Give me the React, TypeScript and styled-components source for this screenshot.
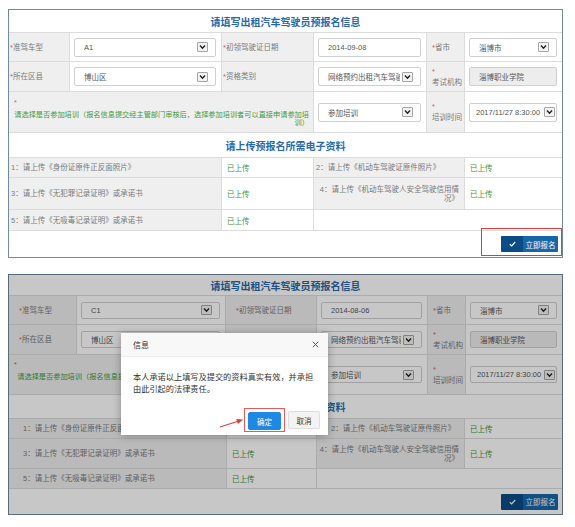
import React from 'react';
import styled, { createGlobalStyle, css } from 'styled-components';

const GlobalStyle = createGlobalStyle`
  html, body {
    margin: 0;
    padding: 0;
    background: #fff;
  }
  body {
    font-family: "Liberation Sans", "Noto Sans CJK SC", sans-serif;
  }
  * {
    box-sizing: border-box;
  }
`;

const Page = styled.div`
  width: 575px;
  height: 527px;
  padding: 9px 0 0 8px;
  display: flex;
  flex-direction: column;
  gap: 16px;
  overflow: hidden;
`;

const normalVars = css`
  --title-h: 23px;
  --row1-h: 29px;
  --row2-h: 30px;
  --row3-h: 41px;
  --ftitle-h: 25px;
  --f1-h: 20px;
  --f2-h: 32px;
  --f3-h: 21px;
  --footer-h: 26px;
  --input-h: 19px;
  --info-cols: 61px 152px 92px 113px 38px 97px;
  --file-cols: 213px 92px 151px 97px;
  --label-pad: 1px;
  --file-pad: 2px;
`;

const compactVars = css`
  --title-h: 21px;
  --row1-h: 29px;
  --row2-h: 30px;
  --row3-h: 40px;
  --ftitle-h: 24px;
  --f1-h: 20px;
  --f2-h: 30px;
  --f3-h: 20px;
  --footer-h: 25px;
  --input-h: 17px;
  --info-cols: 68px 149px 91px 111px 38px 96px;
  --file-cols: 218px 90px 148px 97px;
  --label-pad: 10px;
  --file-pad: 14px;
`;

const Panel = styled.section<{ $compact?: boolean }>`
  position: relative;
  width: 555px;
  border: 1px solid #7189a1;
  background: #fff;
  ${({ $compact }) => ($compact ? compactVars : normalVars)}
`;

const TitleRow = styled.div<{ $files?: boolean }>`
  height: ${({ $files }) => ($files ? 'var(--ftitle-h)' : 'var(--title-h)')};
  display: flex;
  align-items: center;
  justify-content: center;
  border-bottom: 1px solid #dcdcdc;
  font-family: "Noto Sans CJK SC", sans-serif;
  font-size: 10px;
  font-weight: 700;
  color: #2668a8;
`;

const InfoGrid = styled.div`
  display: grid;
  grid-template-columns: var(--info-cols);
  grid-template-rows: var(--row1-h) var(--row2-h) var(--row3-h);
`;

const FileGrid = styled.div`
  display: grid;
  grid-template-columns: var(--file-cols);
  grid-template-rows: var(--f1-h) var(--f2-h) var(--f3-h);
`;

const Cell = styled.div<{ $grey?: boolean; $span?: number; $last?: boolean }>`
  display: flex;
  align-items: center;
  min-width: 0;
  background: ${({ $grey }) => ($grey ? '#efefef' : '#fff')};
  border-bottom: 1px solid #dcdcdc;
  border-right: ${({ $last }) => ($last ? 'none' : '1px solid #dcdcdc')};
  ${({ $span }) => ($span ? `grid-column: span ${$span};` : '')}
`;

const LabelCell = styled(Cell)<{ $narrow?: boolean }>`
  padding-left: ${({ $narrow }) => ($narrow ? '5px' : 'var(--label-pad)')};
  font-size: 7.5px;
  line-height: 11px;
  color: #7a7a7a;
`;

const InputCell = styled(Cell)`
  padding: 0 5px 0 4px;
`;

const Star = styled.span<{ $block?: boolean }>`
  color: #c86060;
  display: ${({ $block }) => ($block ? 'block' : 'inline')};
`;

const TrainingCell = styled(Cell)`
  flex-direction: column;
  align-items: stretch;
  justify-content: center;
  gap: 4px;
  padding: 0 4px 0 5px;
  font-size: 7.2px;
`;

const TrainingText = styled.p`
  margin: 0;
  text-align: right;
  line-height: 8px;
  color: #3c9a3c;
  white-space: nowrap;
`;

const Field = styled.div<{ $disabled?: boolean; $tight?: boolean }>`
  width: 100%;
  height: var(--input-h);
  display: flex;
  align-items: center;
  gap: ${({ $tight }) => ($tight ? '0' : '2px')};
  padding: ${({ $tight }) => ($tight ? '0 1px 0 6px' : '0 7px 0 9px')};
  border: 1px solid #cfcfcf;
  border-radius: 2px;
  background: ${({ $disabled }) => ($disabled ? '#ededed' : '#fff')};
  font-size: 7.5px;
  color: #555;
  overflow: hidden;
`;

const FieldText = styled.span`
  flex: 1;
  min-width: 0;
  white-space: nowrap;
  overflow: hidden;
`;

const ArrowBox = styled.span`
  flex: none;
  width: 11px;
  height: 10px;
  display: flex;
  align-items: center;
  justify-content: center;
  border: 1px solid #a5a5a5;
  border-radius: 1px;
  background: #f3f3f3;
`;

const FileLabel = styled(Cell)<{ $right?: boolean }>`
  padding: 0 5px 0 ${({ $right }) => ($right ? '5px' : 'var(--file-pad)')};
  justify-content: ${({ $right }) => ($right ? 'flex-end' : 'flex-start')};
  text-align: ${({ $right }) => ($right ? 'right' : 'left')};
  font-size: 7.5px;
  line-height: 9px;
  color: #7a7a7a;
  white-space: nowrap;
`;

const FileStatus = styled(Cell)`
  padding-left: 5px;
  font-size: 7.5px;
  color: #3a963a;
`;

const Footer = styled.div`
  height: var(--footer-h);
  display: flex;
  align-items: center;
  justify-content: flex-end;
  padding-right: 4px;
`;

const Highlight = styled.span`
  position: relative;
  display: inline-flex;

  &::after {
    content: '';
    position: absolute;
    left: -20px;
    right: -4px;
    top: -8px;
    bottom: -4px;
    border: 1.5px solid #e0393e;
    pointer-events: none;
  }
`;

const SubmitButton = styled.button`
  display: flex;
  height: 16px;
  width: 57px;
  padding: 0;
  border: none;
  border-radius: 1px;
  overflow: hidden;
  cursor: pointer;
  font-family: "Noto Sans CJK SC", sans-serif;
  font-size: 7.5px;
  color: #fff;
`;

const CheckPart = styled.span`
  width: 22px;
  display: flex;
  align-items: center;
  justify-content: center;
  background: #0b4c86;
`;

const TextPart = styled.span`
  flex: 1;
  display: flex;
  align-items: center;
  justify-content: center;
  background: #1667aa;
`;

const Overlay = styled.div`
  position: absolute;
  inset: -1px;
  background: rgba(0, 0, 0, 0.22);
`;

const Modal = styled.div`
  position: absolute;
  left: 112px;
  top: 58px;
  width: 207px;
  height: 102px;
  display: flex;
  flex-direction: column;
  background: #fff;
  box-shadow: 0 1px 8px rgba(0, 0, 0, 0.3);
  font-family: "Noto Sans CJK SC", sans-serif;
`;

const ModalHeader = styled.div`
  height: 24px;
  flex: none;
  display: flex;
  align-items: center;
  justify-content: space-between;
  padding: 0 9px 0 12px;
  background: #f8f8f8;
  border-bottom: 1px solid #eee;
  font-size: 8px;
  color: #333;
`;

const ModalBody = styled.div`
  flex: 1;
  padding: 14px 12px 0;
  font-size: 8.2px;
  line-height: 11.5px;
  color: #333;
`;

const ModalFooter = styled.div`
  display: flex;
  align-items: center;
  justify-content: flex-end;
  gap: 3px;
  padding: 0 8px 3px;
`;

const ConfirmFrame = styled.span`
  display: inline-flex;
  padding: 3px 3px 1px;
  border: 1px solid #e8585c;
`;

const DialogButton = styled.button<{ $primary?: boolean }>`
  height: 18px;
  width: ${({ $primary }) => ($primary ? '33px' : '32px')};
  padding: 0;
  border: 1px solid ${({ $primary }) => ($primary ? '#1e88e5' : '#dedede')};
  border-radius: 2px;
  background: ${({ $primary }) => ($primary ? '#1e88e5' : '#f3f3f3')};
  color: ${({ $primary }) => ($primary ? '#fff' : '#333')};
  font-family: "Noto Sans CJK SC", sans-serif;
  font-size: 7.5px;
  cursor: pointer;
`;

const PointerArrow = styled.svg`
  position: absolute;
  left: 96px;
  top: 82px;
  overflow: visible;
`;

const Chevron = () => (
  <svg width="7" height="6" viewBox="0 0 7 6">
    <polyline points="1,1.5 3.5,4.2 6,1.5" fill="none" stroke="#222" strokeWidth="1.4" />
  </svg>
);

const SelectBox: React.FC<{ value: string; tight?: boolean }> = ({ value, tight }) => (
  <Field $tight={tight}>
    <FieldText>{value}</FieldText>
    <ArrowBox>
      <Chevron />
    </ArrowBox>
  </Field>
);

const TextBox: React.FC<{ value: string; disabled?: boolean }> = ({ value, disabled }) => (
  <Field $disabled={disabled}>
    <FieldText>{value}</FieldText>
  </Field>
);

interface FormData {
  carType: string;
  licenseDate: string;
}

const SubmitArea: React.FC<{ highlighted?: boolean }> = ({ highlighted }) => {
  const button = (
    <SubmitButton>
      <CheckPart>
        <svg width="7" height="6" viewBox="0 0 7 6">
          <polyline points="0.8,3.2 2.7,5 6.2,1" fill="none" stroke="#fff" strokeWidth="1.2" />
        </svg>
      </CheckPart>
      <TextPart>立即报名</TextPart>
    </SubmitButton>
  );
  return highlighted ? <Highlight>{button}</Highlight> : button;
};

const FormPanel: React.FC<{ data: FormData; compact?: boolean; children?: React.ReactNode }> = ({
  data,
  compact,
  children,
}) => (
  <Panel $compact={compact}>
    <TitleRow>请填写出租汽车驾驶员预报名信息</TitleRow>
    <InfoGrid>
      <LabelCell $grey>
        <span>
          <Star>*</Star>准驾车型
        </span>
      </LabelCell>
      <InputCell>
        <SelectBox value={data.carType} />
      </InputCell>
      <LabelCell $grey>
        <span>
          <Star>*</Star>初领驾驶证日期
        </span>
      </LabelCell>
      <InputCell>
        <TextBox value={data.licenseDate} />
      </InputCell>
      <LabelCell $grey $narrow>
        <span>
          <Star>*</Star>省市
        </span>
      </LabelCell>
      <InputCell $last>
        <SelectBox value="淄博市" />
      </InputCell>

      <LabelCell $grey>
        <span>
          <Star>*</Star>所在区县
        </span>
      </LabelCell>
      <InputCell>
        <SelectBox value="博山区" />
      </InputCell>
      <LabelCell $grey>
        <span>
          <Star>*</Star>资格类别
        </span>
      </LabelCell>
      <InputCell>
        <SelectBox value="网络预约出租汽车驾驶员" />
      </InputCell>
      <LabelCell $grey $narrow>
        <span>
          <Star $block>*</Star>考试机构
        </span>
      </LabelCell>
      <InputCell $last>
        <TextBox value="淄博职业学院" disabled />
      </InputCell>

      <TrainingCell $grey $span={3}>
        <Star $block>*</Star>
        <TrainingText>
          请选择是否参加培训（报名信息提交经主管部门审核后，选择参加培训者可以直接申请参加培
          <br />
          训）
        </TrainingText>
      </TrainingCell>
      <InputCell>
        <SelectBox value="参加培训" />
      </InputCell>
      <LabelCell $grey $narrow>
        <span>
          <Star $block>*</Star>培训时间
        </span>
      </LabelCell>
      <InputCell $last>
        <SelectBox value="2017/11/27 8:30:00" tight />
      </InputCell>
    </InfoGrid>

    <TitleRow $files>请上传预报名所需电子资料</TitleRow>
    <FileGrid>
      <FileLabel $grey>1：请上传《身份证原件正反面照片》</FileLabel>
      <FileStatus>已上传</FileStatus>
      <FileLabel $grey>2：请上传《机动车驾驶证原件照片》</FileLabel>
      <FileStatus $last>已上传</FileStatus>

      <FileLabel $grey>3：请上传《无犯罪记录证明》或承诺书</FileLabel>
      <FileStatus>已上传</FileStatus>
      <FileLabel $grey $right>
        <span>
          4：请上传《机动车驾驶人安全驾驶信用情
          <br />
          况》
        </span>
      </FileLabel>
      <FileStatus $last>已上传</FileStatus>

      <FileLabel $grey>5：请上传《无吸毒记录证明》或承诺书</FileLabel>
      <FileStatus>已上传</FileStatus>
      <Cell $span={2} $last />
    </FileGrid>

    <Footer>
      <SubmitArea highlighted={!compact} />
    </Footer>
    {children}
  </Panel>
);

const ConfirmDialog = () => (
  <>
    <Overlay />
    <Modal>
      <ModalHeader>
        <span>信息</span>
        <svg width="7" height="7" viewBox="0 0 7 7">
          <path d="M0.8 0.8 L6.2 6.2 M6.2 0.8 L0.8 6.2" stroke="#555" strokeWidth="1" />
        </svg>
      </ModalHeader>
      <ModalBody>本人承诺以上填写及提交的资料真实有效，并承担由此引起的法律责任。</ModalBody>
      <ModalFooter>
        <ConfirmFrame>
          <DialogButton $primary>确定</DialogButton>
        </ConfirmFrame>
        <DialogButton>取消</DialogButton>
      </ModalFooter>
      <PointerArrow width="30" height="16" viewBox="0 0 30 16">
        <polygon points="3,12.4 20.5,6.9 20.9,5.7 2.8,11.6" fill="#e0393e" />
        <polygon points="26,4.6 19.2,4.0 20.9,8.9" fill="#e0393e" />
      </PointerArrow>
    </Modal>
  </>
);

export default function App() {
  return (
    <>
      <GlobalStyle />
      <Page>
        <FormPanel data={{ carType: 'A1', licenseDate: '2014-09-08' }} />
        <FormPanel data={{ carType: 'C1', licenseDate: '2014-08-06' }} compact>
          <ConfirmDialog />
        </FormPanel>
      </Page>
    </>
  );
}
